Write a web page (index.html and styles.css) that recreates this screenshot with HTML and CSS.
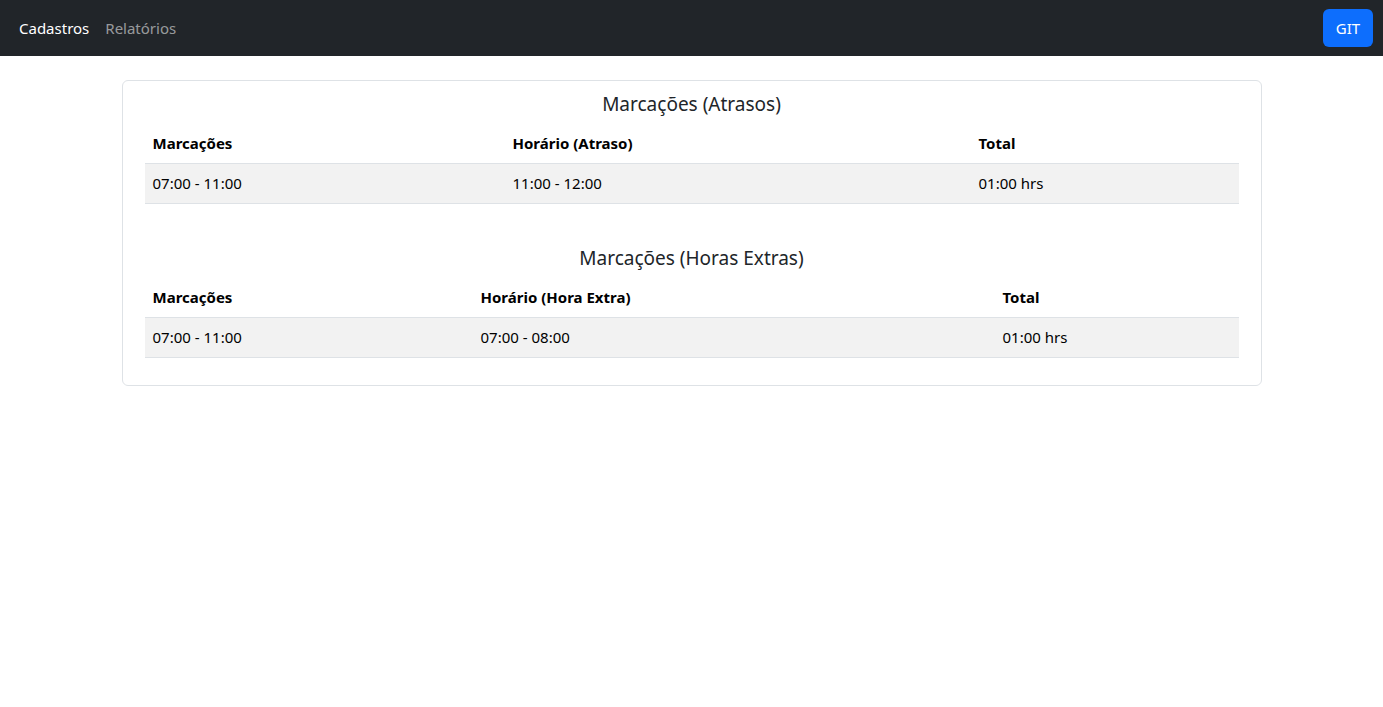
FILE: index.html
```html
<!DOCTYPE html>
<html lang="pt-BR">
<head>
<meta charset="utf-8">
<title>Marcações</title>
<link rel="stylesheet" href="styles.css">
</head>
<body>
<nav class="navbar">
  <div class="nav-links">
    <a class="nav-link active" href="#">Cadastros</a>
    <a class="nav-link" href="#">Relatórios</a>
  </div>
  <a class="btn-git" href="#">GIT</a>
</nav>
<main class="page">
  <section class="card">
    <h5 class="card-title">Marcações (Atrasos)</h5>
    <table class="table t1">
      <colgroup><col class="c1"><col class="c2"><col class="c3"></colgroup>
      <thead><tr><th>Marcações</th><th>Horário (Atraso)</th><th>Total</th></tr></thead>
      <tbody><tr><td>07:00 - 11:00</td><td>11:00 - 12:00</td><td>01:00 hrs</td></tr></tbody>
    </table>
    <h5 class="card-title second">Marcações (Horas Extras)</h5>
    <table class="table t2">
      <colgroup><col class="c1"><col class="c2"><col class="c3"></colgroup>
      <thead><tr><th>Marcações</th><th>Horário (Hora Extra)</th><th>Total</th></tr></thead>
      <tbody><tr><td>07:00 - 11:00</td><td>07:00 - 08:00</td><td>01:00 hrs</td></tr></tbody>
    </table>
  </section>
</main>
</body>
</html>
```

FILE: styles.css
```css
* { box-sizing: border-box; }
html, body { margin: 0; padding: 0; }
body {
  font-family: "Noto Sans", "Open Sans", Arial, sans-serif;
  font-size: 15px;
  line-height: 24px;
  color: #212529;
  background: #fff;
}
.navbar {
  height: 56px;
  background: #212529;
  display: flex;
  align-items: center;
  justify-content: space-between;
  padding: 0 10px 0 11px;
}
.nav-links { display: flex; }
.nav-link {
  padding: 8px 8px;
  color: rgba(255,255,255,0.55);
  text-decoration: none;
}
.nav-link.active { color: #fff; }
.btn-git {
  display: block;
  height: 38px;
  width: 50px;
  line-height: 38px;
  text-align: center;
  background: #0d6efd;
  color: #fff;
  border-radius: 6px;
  text-decoration: none;
}
.page {
  padding-top: 24px;
  display: flex;
  justify-content: center;
}
.card {
  width: 1140px;
  border: 1px solid #dee2e6;
  border-radius: 6px;
  padding: 11px 22px 27px;
}
.card-title {
  margin: 0 0 8px;
  font-size: 19px;
  font-weight: 400;
  line-height: 24px;
  text-align: center;
  color: #212529;
}
.card-title.second { margin-top: 42px; }
.table {
  width: 100%;
  border-collapse: collapse;
  table-layout: fixed;
  color: #000;
}
.table th, .table td {
  text-align: left;
  padding: 7px 8px 8px;
  line-height: 24px;
  border-bottom: 1px solid #dee2e6;
}
.table th { font-weight: 700; }
.table tbody tr { background: #f2f2f2; }
.t1 .c1 { width: 360px; }
.t1 .c2 { width: 466px; }
.t2 .c1 { width: 328px; }
.t2 .c2 { width: 522px; }
```
